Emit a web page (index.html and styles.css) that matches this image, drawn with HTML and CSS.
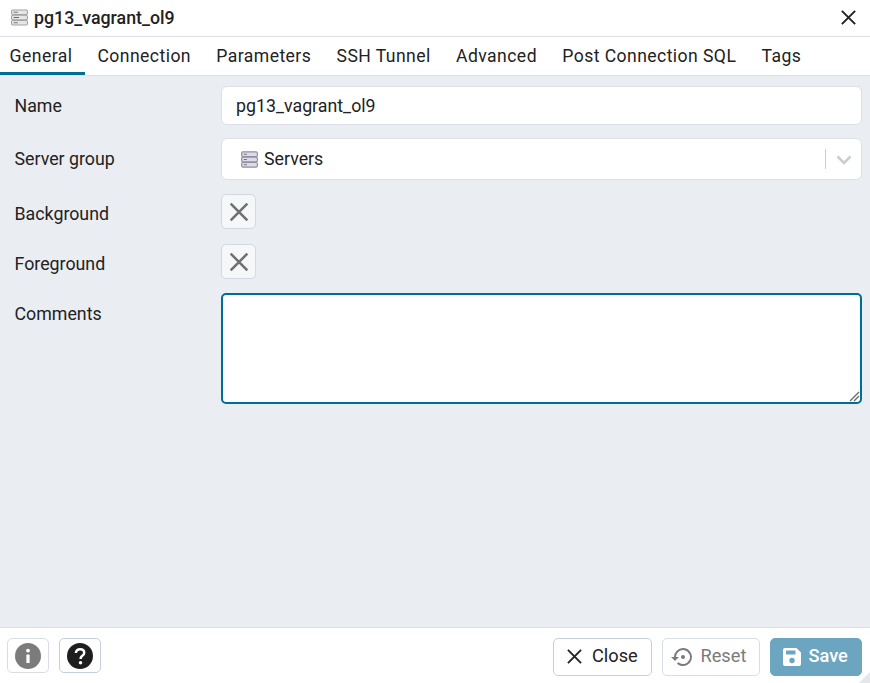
FILE: index.html
```html
<!DOCTYPE html>
<html lang="en">
<head>
<meta charset="utf-8">
<title>pg13_vagrant_ol9</title>
<link rel="stylesheet" href="styles.css">
</head>
<body>
<div class="dialog">
  <header class="titlebar">
    <svg class="title-icon" viewBox="0 0 16 16"><g fill="#e6e6e6" stroke="#a2a2a8" stroke-width="1"><rect x=".5" y="1" width="15" height="4.2" rx="1.2"/><rect x=".5" y="5.9" width="15" height="4.2" rx="1.2"/><rect x=".5" y="10.8" width="15" height="4.2" rx="1.2"/></g><path d="M2.5 3.1h4M2.500 12.900h4" stroke="#7a7a84" stroke-width="1"/><path d="M2.500 8h5" stroke="#5a6a9a" stroke-width="1"/></svg>
    <span class="title-text">pg13_vagrant_ol9</span>
    <svg class="title-close" viewBox="0 0 14 14"><path d="M.8 .8l12.400 12.400M13.200 .8L.8 13.200" stroke="#222" stroke-width="1.800" fill="none"/></svg>
  </header>
  <nav class="tabs">
    <span class="tab active">General</span>
    <span class="tab">Connection</span>
    <span class="tab">Parameters</span>
    <span class="tab">SSH Tunnel</span>
    <span class="tab">Advanced</span>
    <span class="tab">Post Connection SQL</span>
    <span class="tab">Tags</span>
  </nav>
  <main class="form">
    <div class="row row-name">
      <label class="label">Name</label>
      <div class="input">pg13_vagrant_ol9</div>
    </div>
    <div class="row row-group">
      <label class="label">Server group</label>
      <div class="input select">
        <svg class="group-icon" viewBox="0 0 16 16"><g fill="#dcdce4" stroke="#8f8fa3" stroke-width="1.100"><rect x=".6" y=".8" width="14.800" height="4.400" rx="1.300"/><rect x=".6" y="5.800" width="14.800" height="4.400" rx="1.300"/><rect x=".6" y="10.800" width="14.800" height="4.400" rx="1.300"/></g><path d="M2.600 3h3M2.600 8h3M2.600 13h3" stroke="#77778a" stroke-width="1"/></svg>
        <span class="select-value">Servers</span>
        <span class="select-sep"></span>
        <svg class="chevron" viewBox="0 0 16 10"><path d="M1.500 1.500L8 8l6.500-6.500" stroke="#cccccc" stroke-width="2.600" fill="none"/></svg>
      </div>
    </div>
    <div class="row row-color">
      <label class="label">Background</label>
      <button class="swatch"><svg viewBox="0 0 18 18"><path d="M1.500 1.500l15 15M16.500 1.500l-15 15" stroke="#707070" stroke-width="2.300" fill="none"/></svg></button>
    </div>
    <div class="row row-color">
      <label class="label">Foreground</label>
      <button class="swatch"><svg viewBox="0 0 18 18"><path d="M1.500 1.500l15 15M16.500 1.500l-15 15" stroke="#707070" stroke-width="2.300" fill="none"/></svg></button>
    </div>
    <div class="row row-comments">
      <label class="label">Comments</label>
      <div class="comments-wrap">
        <textarea class="comments"></textarea>
        <svg class="grip" viewBox="0 0 11 11"><path d="M1 10L10 1M5 10l5-5" stroke="#666" stroke-width="1.300" fill="none"/></svg>
      </div>
    </div>
  </main>
  <footer class="footer">
    <button class="btn btn-icon muted"><svg viewBox="0 0 24 24"><circle cx="12" cy="12" r="12" fill="#7b7b7b"/><rect x="10.500" y="10.500" width="3" height="8" rx=".6" fill="#fff"/><circle cx="12" cy="7" r="1.800" fill="#fff"/></svg></button>
    <button class="btn btn-icon"><svg viewBox="0 0 24 24"><circle cx="12" cy="12" r="12" fill="#1e1e1e"/><path d="M8.200 9.300c0-2.200 1.700-3.600 3.900-3.600s3.800 1.300 3.800 3.200c0 1.600-.9 2.400-2 3.100-1 .7-1.300 1.100-1.300 2.200v.5" fill="none" stroke="#fff" stroke-width="2.300"/><circle cx="12.500" cy="18.300" r="1.600" fill="#fff"/></svg></button>
    <span class="spacer"></span>
    <button class="btn btn-text"><svg class="ico-close" viewBox="0 0 16 16"><path d="M1 1l14 14M15 1L1 15" stroke="#222" stroke-width="2" fill="none"/></svg>Close</button>
    <button class="btn btn-text disabled"><svg class="ico-reset" viewBox="0 0 24 24"><path d="M13 3a9 9 0 0 0-9 9H1l4 4 4-4H6a7 7 0 1 1 2.300 5.200l-1.400 1.500A9 9 0 1 0 13 3z" fill="#7b7b7b"/><circle cx="13" cy="12" r="2" fill="#7b7b7b"/></svg>Reset</button>
    <button class="btn btn-save"><svg class="ico-save" viewBox="0 0 20 20"><path d="M2.500 1h12L19 5.500v11.500a2 2 0 0 1-2 2H3a2 2 0 0 1-2-2V3a2 2 0 0 1 1.500-2z" fill="#fff"/><rect x="4" y="3.500" width="9.500" height="4" rx=".5" fill="#6ba5bf"/><circle cx="10" cy="13.500" r="2.700" fill="#6ba5bf"/></svg>Save</button>
  </footer>
  <svg class="corner" viewBox="0 0 11 11"><path d="M11 0v11H0z" fill="#e4e6ea"/></svg>
</div>
</body>
</html>
```
FILE: styles.css
```css
* { box-sizing: border-box; }
html, body { margin: 0; padding: 0; }
body { font-family: Roboto, "Liberation Sans", sans-serif; font-size: 17.8px; color: #222; background: #fff; }
.dialog { width: 870px; height: 683px; display: flex; flex-direction: column; position: relative; overflow: hidden; }

.titlebar { height: 37px; display: flex; align-items: center; padding: 0 14px 2px 11px; border-bottom: 1px solid #dde0e6; flex: none; }
.title-icon { width: 17px; height: 17px; margin-right: 6px; }
.title-text { font-size: 17.8px; font-weight: 500; flex: 1; }
.title-close { width: 15px; height: 15px; }

.tabs { height: 39px; display: flex; border-bottom: 1px solid #dde0e6; flex: none; }
.tab { font-size: 17.6px; padding: 0 12.65px; line-height: 38px; height: 38px; white-space: nowrap; letter-spacing: .43px; }
.tab:first-child { padding: 0 12.4px 0 9.6px; }
.tab.active { border-bottom: 3px solid #006d94; }

.form { flex: 1; background: #eaedf1; padding: 10px 8px 0 14.5px; }
.row { display: flex; }
.label { width: 206.5px; flex: none; }
.row-name { height: 39px; margin-bottom: 13px; align-items: center; }
.row-group { height: 42px; margin-bottom: 14px; align-items: center; }
.row-group .label { padding-bottom: 2px; }
.row-color { height: 35px; margin-bottom: 15px; align-items: center; }
.row-comments { height: 111px; margin-top: -1px; }
.row-comments .label { padding-top: 10px; }
.row-color .label { padding-top: 4px; }
.input { flex: 1; height: 100%; background: #fff; border: 1px solid #dde0e6; border-radius: 6px; display: flex; align-items: center; padding: 0 14px; }
.select { padding: 0 8px 0 19px; }
.group-icon { width: 17px; height: 17px; margin-right: 6px; }
.select-value { flex: 1; padding-bottom: 2px; }
.select-sep { width: 1px; height: 20px; background: #ccc; margin-right: 10px; }
.chevron { width: 16px; height: 10px; margin-right: 1px; margin-top: 2px; }
.swatch { width: 35px; height: 35px; padding: 0; background: #f6f7f9; border: 1px solid #d3d8e2; border-radius: 5px; display: flex; align-items: center; justify-content: center; }
.swatch svg { width: 20px; height: 20px; }
.comments-wrap { flex: 1; height: 100%; position: relative; }
.comments { width: 100%; height: 100%; display: block; border: 2px solid #006d94; border-radius: 5px; background: #fff; outline: none; margin: 0; resize: none; }
.grip { position: absolute; right: 2px; bottom: 2px; width: 11px; height: 11px; }

.footer { height: 56px; flex: none; border-top: 1px solid #dde0e6; background: #fff; display: flex; align-items: flex-start; padding: 10px 8px 0 7px; }
.btn { height: 38px; background: #fff; border: 1px solid #c6cfdc; border-radius: 5px; font: inherit; font-size: 18.2px; line-height: 34px; color: #222; display: flex; align-items: center; justify-content: flex-start; padding: 0 0 2px 0; }
.btn-icon { width: 42px; height: 35px; margin-right: 10px; justify-content: center; padding: 0; }
.btn-icon svg { width: 26px; height: 26px; }
.btn-icon.muted { border-color: #d8dde6; }
.spacer { flex: 1; }
.btn-text { width: 99px; margin-left: 10px; padding-left: 13px; }
.btn-text.disabled { width: 98px; padding-left: 7px; color: #7b7b7b; border-color: #d8dde6; }
.ico-close { width: 15px; height: 15px; margin-right: 10px; margin-top: 1px; }
.ico-reset { width: 24px; height: 24px; margin-right: 6.500px; margin-top: 1px; }
.btn-save { width: 92px; margin-left: 10px; padding-left: 11px; background: #6ba5bf; border-color: #6ba5bf; color: #fff; font-weight: 500; }
.ico-save { width: 20px; height: 20px; margin-right: 6.500px; margin-top: 1px; }
.corner { position: absolute; right: 0; bottom: 0; width: 11px; height: 11px; }
```
